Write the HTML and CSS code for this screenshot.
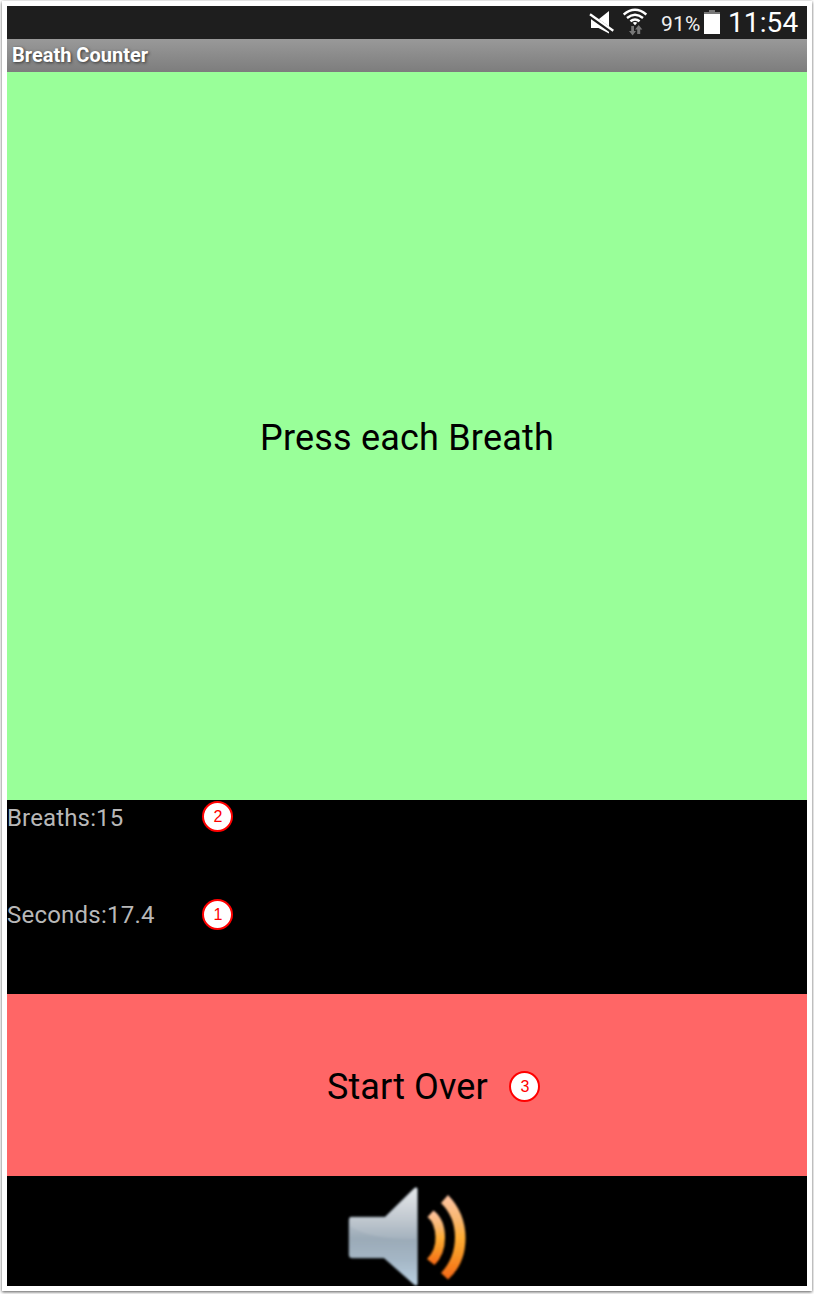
FILE: index.html
```
<!DOCTYPE html>
<html lang="en">
<head>
<meta charset="utf-8">
<title>Breath Counter</title>
<link rel="stylesheet" href="styles.css">
</head>
<body>
<div class="frame">
  <main class="screen">
    <header class="status-bar">
      <svg class="icon-mute" width="25" height="24" viewBox="0 0 25 24">
        <path d="M2 8H10L20 0V22.500L9.500 17H2Z" fill="#fff"/>
        <path d="M-1 3.300L25 21.700" stroke="#1e1e1e" stroke-width="4.600"/>
        <path d="M1 3.300L24.300 19.800" stroke="#fff" stroke-width="2.300"/>
      </svg>
      <svg class="icon-wifi" width="24" height="28" viewBox="0 0 24 28">
        <g fill="none" stroke="#fff" stroke-width="2.400">
          <path d="M.7 6.500Q12 -3 23.300 6.500"/>
          <path d="M4 10Q12 3.500 20 10"/>
          <path d="M7.400 13.300Q12 9.500 16.600 13.300"/>
        </g>
        <path d="M9.700 14.800Q12 13 14.300 14.800L12 17.200Z" fill="#fff"/>
        <path d="M8.200 18H11V23H13L9.600 27.500L6 23H8.200ZM14.200 26V21.500H12L15.700 17L19.300 21.500H17.200V26Z" fill="#777"/>
      </svg>
      <span class="percent">91%</span>
      <svg class="icon-battery" width="16" height="24" viewBox="0 0 16 24">
        <path d="M5 0H11V2H16V4H0V2H5Z" fill="#777"/>
        <path d="M0 4H16V24H0Z" fill="#fff"/>
      </svg>
      <time class="clock">11:54</time>
    </header>
    <h1 class="title-bar">Breath Counter</h1>
    <button class="breath-button"><span class="press-label">Press each Breath</span></button>
    <section class="stats">
      <div class="stat"><span class="stat-text">Breaths:15</span><span class="badge badge-two">2</span></div>
      <div class="stat"><span class="stat-text seconds">Seconds:17.4</span><span class="badge badge-one">1</span></div>
    </section>
    <button class="restart-button"><span class="restart-label">Start Over</span><span class="badge badge-three">3</span></button>
    <footer class="sound">
      <svg class="speaker" width="130" height="110" viewBox="342 1176 130 110">
        <defs>
          <linearGradient id="metal" x1="0" y1="0" x2="0" y2="1">
            <stop offset="0" stop-color="#e4e7ea"/>
            <stop offset=".3" stop-color="#bdc5cd"/>
            <stop offset=".52" stop-color="#9baab7"/>
            <stop offset=".75" stop-color="#a5b7c6"/>
            <stop offset="1" stop-color="#b9d0e2"/>
          </linearGradient>
          <linearGradient id="amber" x1="0" y1="0" x2="0" y2="1">
            <stop offset="0" stop-color="#ffc5a4"/>
            <stop offset=".3" stop-color="#f8b66e"/>
            <stop offset=".5" stop-color="#ffad35"/>
            <stop offset=".7" stop-color="#f79626"/>
            <stop offset="1" stop-color="#f76816"/>
          </linearGradient>
          <filter id="soft"><feGaussianBlur stdDeviation=".9"/></filter>
        </defs>
        <g filter="url(#soft)">
          <path d="M351 1217H385L414 1188.500Q417.500 1186 417.500 1190V1283Q417.500 1287 414 1284.500L384 1258H352Q349 1258 349 1255V1220Q349 1217 351 1217Z" fill="url(#metal)" stroke="#70808d" stroke-width=".7"/>
          <path d="M350 1218H386L416 1190V1239Q370 1240 350 1226Z" fill="#fff" opacity=".1"/>
          <path d="M427.500 1217L433.500 1210.500Q445 1219 445 1237.500Q445 1255 434.500 1265L427 1259Q436 1250 435.500 1237Q435 1223 427.500 1217Z" fill="url(#amber)"/>
          <path d="M441 1203L448 1195Q465.500 1213 465.500 1238Q465.500 1264 448 1279.500L441 1273Q455 1258 455 1237Q455 1217 441 1203Z" fill="url(#amber)"/>
        </g>
      </svg>
    </footer>
  </main>
</div>
</body>
</html>
```
FILE: styles.css
```
* { box-sizing: border-box; }
body { margin: 0; padding: 1px 2px 3px; background: #fff; font-family: Roboto, sans-serif; }
.frame { width: 810px; height: 1290px; padding: 5px; background: #fff; box-shadow: 0 1px 3px #555; }
.screen { display: flex; flex-direction: column; width: 800px; height: 1280px; background: #000; }
button { border: 0; padding: 0; font: inherit; color: #000; }
.status-bar { display: flex; height: 33px; background: #1e1e1e; color: #fff; padding-left: 582px; }
.icon-mute { margin-top: 5px; flex: none; }
.icon-wifi { margin: 2px 0 0 9px; flex: none; }
.percent { margin: 6px 0 0 14px; width: 43px; font-size: 21px; line-height: 24px; letter-spacing: .2px; color: #f0f0f0; }
.icon-battery { margin-top: 4px; flex: none; }
.clock { margin: 0 0 0 8px; font-size: 28px; line-height: 33px; letter-spacing: .1px; }
.title-bar { height: 33px; margin: 0; padding-left: 5px; background: linear-gradient(#999, #7d7d7d); color: #fff; font-size: 20px; line-height: 32px; font-weight: 700; text-shadow: 1px 1px 3px #333; }
.breath-button { height: 728px; padding-top: 4px; background: #9f9; font-size: 36px; letter-spacing: .2px; }
.press-label { display: inline-block; }
.stats { height: 194px; color: #b8b8b8; }
.stat { display: flex; height: 97px; }
.stat-text { width: 195px; padding-top: 4px; font-size: 24px; line-height: 29px; letter-spacing: .15px; }
.seconds { letter-spacing: .22px; }
.badge { display: block; width: 31px; height: 31px; border: 2px solid #f00; border-radius: 50%; background: #fff; color: #f00; font: 16px/27px "Liberation Sans", sans-serif; text-align: center; padding-left: 1px; }
.badge-two { margin-top: 1px; }
.badge-one { margin-top: 2px; }
.restart-button { display: flex; align-items: center; height: 182px; padding-left: 320px; background: #f66; font-size: 36px; letter-spacing: .1px; }
.restart-label { width: 182px; padding-top: 4px; text-align: left; }
.badge-three { margin-top: 2px; letter-spacing: 0; }
.sound { height: 110px; padding-left: 335px; }
.speaker { display: block; }
```
